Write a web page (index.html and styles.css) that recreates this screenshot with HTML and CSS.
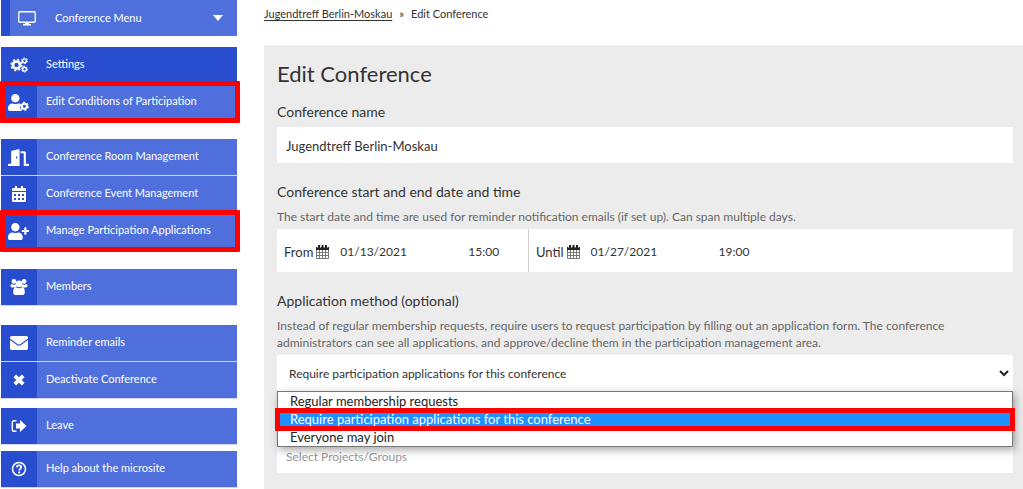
FILE: index.html
```html
<!DOCTYPE html>
<html lang="en">
<head>
<meta charset="utf-8">
<meta name="viewport" content="width=device-width, initial-scale=1">
<title>Edit Conference</title>
<link rel="stylesheet" href="styles.css">
</head>
<body>
<svg class="sprite" aria-hidden="true">
  <symbol id="calendar" viewBox="0 0 13 14">
    <path fill="none" stroke="#777" d="M.5 3v10.500h12V3M.5 7.500h12M.5 10.500h12M3.500 5v8.500M6.500 5v8.500M9.500 5v8.500"/>
    <path fill="#222" d="M0 2h13v3H0zM2 0h2v3H2zM5.500 0h2v3h-2zM9 0h2v3H9z"/>
    <path stroke="#fff" stroke-width=".6" d="M1.500 1v2M4.600 1v2M8.300 1v2M11.600 1v2"/>
  </symbol>
</svg>
<div class="page">
  <nav class="sidebar" aria-label="Conference">
    <button class="menu-toggle" type="button">
      <svg class="icon-screen" viewBox="0 0 18 15" aria-hidden="true"><rect x=".75" y=".75" width="16.500" height="10.500" rx="1" fill="none" stroke="#fff" stroke-width="1.300"/><path fill="#fff" d="M7 11h4v2h2v1.500H5V13h2z"/></svg>
      <span>Conference Menu</span>
      <svg class="icon-caret" viewBox="0 0 10 6" aria-hidden="true"><path fill="#fff" d="M0 0h10L5 6z"/></svg>
    </button>
    <div class="group group-main">
      <a class="item active" href="#"><span class="icon"><svg viewBox="0 0 18 16" aria-hidden="true"><g fill="none" stroke="#fff"><circle cx="6.500" cy="8" r="3.500" stroke-width="2.600"/><circle cx="6.500" cy="8" r="5.400" stroke-width="1.600" stroke-dasharray="2.120 2.120"/><circle cx="14.500" cy="3.800" r="1.900" stroke-width="1.400"/><circle cx="14.500" cy="3.800" r="2.900" stroke-width="1" stroke-dasharray="1.520 1.520"/><circle cx="14.500" cy="12.200" r="1.900" stroke-width="1.400"/><circle cx="14.500" cy="12.200" r="2.900" stroke-width="1" stroke-dasharray="1.520 1.520"/></g></svg></span><span class="text">Settings</span></a>
      <a class="item marked" href="#"><span class="icon wide"><svg viewBox="0 0 640 512" aria-hidden="true"><path fill="#fff" d="M224 256c70.700 0 128-57.300 128-128S294.700 0 224 0 96 57.300 96 128s57.300 128 128 128zM313 288h-16c-22 10-47 16-73 16s-51-6-73-16h-17C60 288 0 348 0 422v42c0 26.500 21.500 48 48 48h352c10 0 18-3 25-8v-5c-26-14-42-32-54-60l-10-28 24-22v-20l-26-26 20-48c-20-5-43-7-66-7z"/><circle cx="500" cy="370" r="78" fill="none" stroke="#fff" stroke-width="64"/><circle cx="500" cy="370" r="120" fill="none" stroke="#fff" stroke-width="36" stroke-dasharray="62.800 62.800"/></svg></span><span class="text">Edit Conditions of Participation</span></a>
    </div>
    <div class="group group-manage">
      <a class="item" href="#"><span class="icon wide"><svg viewBox="0 0 640 512" aria-hidden="true"><path fill="#fff" d="M624 448h-80V113.450C544 86.190 522.470 64 496 64H384v64h96v384h144c8.840 0 16-7.160 16-16v-32c0-8.840-7.160-16-16-16zM312.240 1.010l-192 49.740C105.990 54.440 96 67.700 96 82.920V448H16c-8.840 0-16 7.160-16 16v32c0 8.840 7.160 16 16 16h336V33.180c0-21.580-19.560-37.410-39.760-32.170zM264 288c-13.250 0-24-14.330-24-32s10.750-32 24-32 24 14.330 24 32-10.750 32-24 32z"/></svg></span><span class="text">Conference Room Management</span></a>
      <a class="item" href="#"><span class="icon"><svg viewBox="0 0 448 512" aria-hidden="true"><path fill="#fff" fill-rule="evenodd" d="M0 192h448v272c0 26.500-21.500 48-48 48H48c-26.500 0-48-21.500-48-48zM64 256v64h64v-64zM192 256v64h64v-64zM320 256v64h64v-64zM64 384v64h64v-64zM192 384v64h64v-64zM320 384v64h64v-64z"/><path fill="#fff" d="M448 160H0v-48c0-26.500 21.500-48 48-48h48V12c0-7 5-12 12-12h40c7 0 12 5 12 12v52h128V12c0-7 5-12 12-12h40c7 0 12 5 12 12v52h48c26.500 0 48 21.500 48 48z"/></svg></span><span class="text">Conference Event Management</span></a>
      <a class="item marked" href="#"><span class="icon wide"><svg viewBox="0 0 640 512" aria-hidden="true"><path fill="#fff" d="M624 208h-64v-64c0-8.800-7.200-16-16-16h-32c-8.800 0-16 7.200-16 16v64h-64c-8.800 0-16 7.200-16 16v32c0 8.800 7.200 16 16 16h64v64c0 8.800 7.200 16 16 16h32c8.800 0 16-7.200 16-16v-64h64c8.800 0 16-7.200 16-16v-32c0-8.800-7.200-16-16-16zm-400 48c70.700 0 128-57.300 128-128S294.700 0 224 0 96 57.300 96 128s57.300 128 128 128zm89.600 32h-16.700c-22.200 10.200-46.900 16-72.900 16s-50.600-5.800-72.900-16h-16.700C60.200 288 0 348.200 0 422.400V464c0 26.500 21.500 48 48 48h352c26.500 0 48-21.500 48-48v-41.600c0-74.200-60.200-134.400-134.400-134.400z"/></svg></span><span class="text">Manage Participation Applications</span></a>
    </div>
    <div class="group">
      <a class="item" href="#"><span class="icon"><svg viewBox="0 0 18 17" aria-hidden="true"><g fill="#fff"><circle cx="3.600" cy="2.600" r="2.500"/><circle cx="14.400" cy="2.600" r="2.500"/><path d="M1.500 5.500c2 1 3 .8 4.200.2 0 1.500.2 2.500 1 3.300H2C.5 9 0 8.300 0 7.300 0 6 .5 5 1.500 5.500zM16.500 5.500c-2 1-3 .8-4.200.2 0 1.500-.2 2.500-1 3.300H16c1.500 0 2-.7 2-1.700 0-1.300-.5-2.300-1.500-1.800z"/><circle cx="9" cy="5.200" r="3.500"/><path d="M5.500 8.700c2 1.500 5 1.500 7 0 2 .2 2.700 2.300 2.700 5.300 0 2-1 3-2.700 3h-7c-1.700 0-2.700-1-2.700-3 0-3 .7-5.100 2.700-5.300z"/></g></svg></span><span class="text">Members</span></a>
    </div>
    <div class="group">
      <a class="item" href="#"><span class="icon"><svg viewBox="0 0 18 14" aria-hidden="true"><rect width="18" height="14" rx="1.700" fill="#fff"/><path d="M0 3.300l7.200 5.200q1.800 1.300 3.600 0L18 3.300" fill="none" stroke="#284ecf" stroke-width="1.100"/></svg></span><span class="text">Reminder emails</span></a>
      <a class="item" href="#"><span class="icon small"><svg viewBox="0 0 12 12" aria-hidden="true"><path d="M1.800 1.800l8.400 8.400M10.200 1.800l-8.400 8.400" stroke="#fff" stroke-width="3.800"/></svg></span><span class="text">Deactivate Conference</span></a>
    </div>
    <div class="group group-leave">
      <a class="item" href="#"><span class="icon exit"><svg viewBox="0 0 16 14" aria-hidden="true"><path d="M5.500 1.700H3Q1.300 1.700 1.300 3.500v7q0 1.800 1.700 1.800h2.500" fill="none" stroke="#fff" stroke-width="1.400"/><path d="M5 4.500h4V1l6.500 6L9 13V9.500H5z" fill="#fff"/></svg></span><span class="text">Leave</span></a>
    </div>
    <div class="group group-help">
      <a class="item" href="#"><span class="icon"><svg viewBox="0 0 16 16" aria-hidden="true"><circle cx="8" cy="8" r="6.500" fill="none" stroke="#fff" stroke-width="1.500"/><path d="M5.600 6.400C5.900 4.900 6.900 4.400 8 4.400c1.300 0 2.300.8 2.300 1.900 0 1.500-2.100 1.500-2.100 3.200" fill="none" stroke="#fff" stroke-width="1.700"/><path fill="#fff" d="M7.200 10.500h2v1.800h-2z"/></svg></span><span class="text">Help about the microsite</span></a>
    </div>
  </nav>

  <main class="content">
    <nav class="breadcrumb" aria-label="Breadcrumb"><a href="#">Jugendtreff Berlin-Moskau</a><span>»</span><span>Edit Conference</span></nav>
    <form class="panel">
      <h1>Edit Conference</h1>
      <label class="label" for="name">Conference name</label>
      <input class="field" id="name" type="text" value="Jugendtreff Berlin-Moskau">

      <h2 class="label">Conference start and end date and time</h2>
      <p class="help">The start date and time are used for reminder notification emails (if set up). Can span multiple days.</p>
      <div class="dates">
        <div class="date">
          <label for="from">From <svg class="cal" aria-hidden="true"><use href="#calendar"/></svg></label>
          <input class="day" id="from" type="text" value="01/13/2021">
          <input class="time" type="text" aria-label="From time" value="15:00">
        </div>
        <div class="date">
          <label for="until">Until <svg class="cal" aria-hidden="true"><use href="#calendar"/></svg></label>
          <input class="day" id="until" type="text" value="01/27/2021">
          <input class="time" type="text" aria-label="Until time" value="19:00">
        </div>
      </div>

      <label class="label" for="method">Application method (optional)</label>
      <p class="help">Instead of regular membership requests, require users to request participation by filling out an application form. The conference administrators can see all applications, and approve/decline them in the participation management area.</p>
      <div class="select">
        <select class="field" id="method">
          <option>Regular membership requests</option>
          <option selected>Require participation applications for this conference</option>
          <option>Everyone may join</option>
        </select>
        <svg class="chevron" viewBox="0 0 10 7" aria-hidden="true"><path d="M1 1l4 4 4-4" fill="none" stroke="#222" stroke-width="2"/></svg>
        <ul class="options" role="listbox" aria-label="Application method">
          <li role="option">Regular membership requests</li>
          <li class="chosen" role="option" aria-selected="true">Require participation applications for this conference</li>
          <li role="option">Everyone may join</li>
        </ul>
      </div>
      <input class="field projects" type="text" aria-label="Projects and groups" placeholder="Select Projects/Groups">
    </form>
  </main>
</div>
</body>
</html>
```
FILE: styles.css
```css
* { box-sizing: border-box; }
body {
  margin: 0;
  background: #fff;
  color: #333;
  font: 13px/18px Lato, "Open Sans", sans-serif;
}
h1, h2, p, ul { margin: 0; padding: 0; font-weight: 400; }
input, select, button { font: inherit; color: inherit; border: 0; border-radius: 0; }
.sprite { position: absolute; width: 0; height: 0; }
.page {
  display: grid;
  grid-template-columns: 236px minmax(0, 1fr);
  column-gap: 27px;
  padding-left: 1px;
}

.sidebar { color: #fff; font-size: 11px; }
.menu-toggle {
  display: flex;
  align-items: center;
  width: 100%;
  height: 36px;
  padding: 0 14px 0 8px;
  border-left: 9px solid #284ecf;
  background: #4f70dc;
  text-align: left;
}
.icon-screen { width: 18px; height: 15px; margin-right: 19px; }
.icon-caret { width: 10px; height: 6px; margin-left: auto; }
.group {
  display: flex;
  flex-direction: column;
  gap: 1px;
  margin-top: 20px;
}
.group-main { margin-top: 11px; }
.group-manage { margin-top: 19px; }
.group-leave { margin-top: 10px; }
.group-help { margin-top: 7px; }
.item {
  position: relative;
  display: flex;
  align-items: center;
  gap: 9px;
  height: 36px;
  background: #4f70dc;
  box-shadow: 0 1px #d5d8e4;
  color: #fff;
  text-decoration: none;
}
.item.active { background: #284ecf; box-shadow: 0 1px #284ecf; }
.text { padding-bottom: 2px; }
.icon {
  display: grid;
  place-items: center;
  width: 36px;
  height: 36px;
  background: #284ecf;
}
.icon svg { width: 18px; height: 16px; }
.icon.wide { padding-right: 2px; }
.icon.wide svg { width: 21px; height: 17px; }
.icon.small svg { width: 12px; height: 12px; }
.icon.exit svg { width: 16px; height: 14px; }
.marked::after {
  content: "";
  position: absolute;
  z-index: 1;
  inset: -3px -3px -3px -1px;
  border: 5px solid #f00;
  border-radius: 1px;
}

.content { display: flex; flex-direction: column; min-height: 100vh; }
.breadcrumb {
  display: flex;
  gap: 7px;
  height: 45px;
  padding-top: 5px;
  font-size: 11px;
}
.breadcrumb a { color: inherit; text-underline-offset: 2px; }
.panel {
  display: flex;
  flex: 1;
  flex-direction: column;
  padding: 15px 10px 16px 13px;
  background: #ececec;
}
h1 { font-size: 22px; line-height: 28px; }
.label { font-size: 14px; line-height: 20px; }
h1 + .label { margin: 14px 0 5px; }
.field {
  width: 100%;
  height: 36px;
  padding: 2px 9px 0;
  background: #fff;
  font-size: 13px;
}
.field + .label { margin-top: 19px; }
.help { margin: 6px 0 4px; color: #666; font-size: 12px; line-height: 17px; }
.dates {
  display: flex;
  height: 43px;
  background: #fff;
}
.date {
  display: flex;
  align-items: center;
  width: 251px;
  padding: 2px 0 0 7px;
}
.date + .date { border-left: 1px solid #d0d0d0; }
.date label { display: flex; align-items: center; gap: 3px; }
.cal { width: 13px; height: 14px; }
.date input { padding: 0; background: none; font-size: 12px; }
.day { width: 128px; margin-left: 11px; }
.time { width: 45px; }
.dates + .label { margin-top: 19px; }
.select { position: relative; }
select.field { display: block; padding-left: 12px; appearance: none; font-size: 12px; }
.chevron { position: absolute; top: 15px; right: 4px; width: 10px; height: 7px; }
.options {
  position: absolute;
  z-index: 2;
  top: 100%;
  left: 0;
  right: 0;
  border: 1px solid #777;
  background: #fff;
  box-shadow: 2px 3px 8px rgba(0, 0, 0, .35);
  color: #222;
  font-size: 13px;
  list-style: none;
}
.options li { position: relative; height: 18px; padding-left: 12px; }
.options .chosen { background: #1e90ff; color: #fff; }
.chosen::after {
  content: "";
  position: absolute;
  inset: -2px -3px -3px;
  z-index: 1;
  border: 5px solid #f00;
}
.projects { margin-top: 46px; font-size: 12px; }
.projects::placeholder { color: #999; opacity: 1; }
```
